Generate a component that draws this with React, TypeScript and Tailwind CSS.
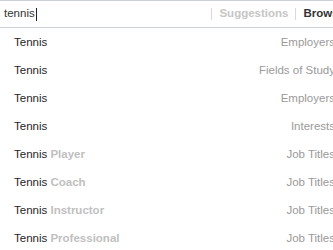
const rows: { main: string; extra?: string; type: string }[] = [
  { main: 'Tennis', type: 'Employers' },
  { main: 'Tennis', type: 'Fields of Study' },
  { main: 'Tennis', type: 'Employers' },
  { main: 'Tennis', type: 'Interests' },
  { main: 'Tennis', extra: 'Player', type: 'Job Titles' },
  { main: 'Tennis', extra: 'Coach', type: 'Job Titles' },
  { main: 'Tennis', extra: 'Instructor', type: 'Job Titles' },
  { main: 'Tennis', extra: 'Professional', type: 'Job Titles' },
]

export default function App() {
  return (
    <div className="w-[333px] h-[250px] overflow-hidden bg-white font-['Liberation_Sans',Arial,sans-serif] text-[11.5px]">
      <div className="w-[345px]">
        {/* search bar */}
        <div className="h-[28px] border-t border-b border-[#cdd1d9] flex items-center pl-1">
          <div className="flex-1 flex items-center text-[#333]">
            <span>tennis</span>
            <span className="ml-px w-px h-[13px] bg-[#222]" />
          </div>
          <span className="w-px h-[12px] bg-[#d9d9d9]" />
          <span className="px-[7px] font-bold text-[#c6c6c6]">Suggestions</span>
          <span className="w-px h-[12px] bg-[#d9d9d9]" />
          <span className="pl-[7px] font-bold text-[#333] whitespace-nowrap">Browse</span>
        </div>

        {/* results */}
        <div className="flex flex-col pt-px">
          {rows.map((r, i) => (
            <div key={i} className="h-[28px] flex items-center justify-between pl-[14px] pr-[10px]">
              <span className="text-[#262626]">
                {r.main}
                {r.extra && <span className="font-bold text-[#c0c0c0]"> {r.extra}</span>}
              </span>
              <span className="text-[#9a9a9a]">{r.type}</span>
            </div>
          ))}
        </div>
      </div>
    </div>
  )
}
